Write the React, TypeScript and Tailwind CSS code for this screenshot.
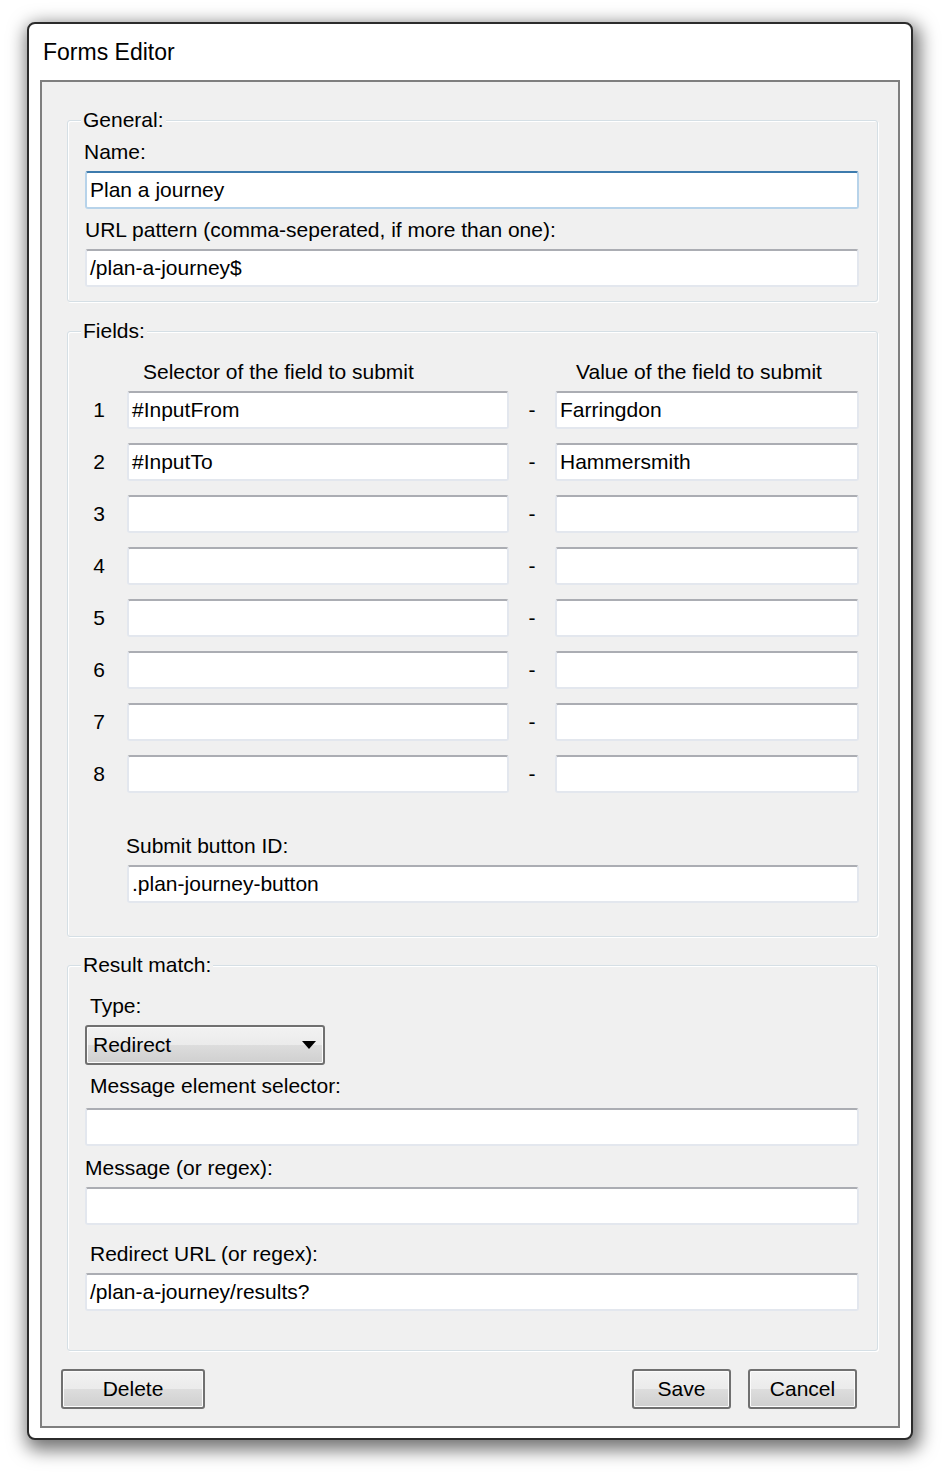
import type { ReactNode } from 'react';

function TextBox({ value = '', focused = false, className = '' }: { value?: string; focused?: boolean; className?: string }) {
  return (
    <div
      className={`h-[38px] bg-white border-2 rounded-[3px] pl-[3px] flex items-center whitespace-nowrap overflow-hidden ${
        focused ? 'border-[#b7d3ea] border-t-[#3d7bad]' : 'border-[#e3e7ee] border-t-[#abadb3]'
      } ${className}`}
    >
      {value}
    </div>
  );
}

function Label({ children, className = '' }: { children: ReactNode; className?: string }) {
  return <div className={`h-[24px] leading-[24px] ${className}`}>{children}</div>;
}

function Group({ title, className = '', children }: { title: string; className?: string; children: ReactNode }) {
  return (
    <div
      className={`relative ml-[25px] mr-[20px] border border-[#d5dfe5] rounded-[3px] shadow-[inset_1px_1px_0_#ffffff,1px_1px_0_#ffffff] ${className}`}
    >
      <span className="absolute left-[13px] -top-[13px] bg-[#f0f0f0] px-[2px] leading-[24px]">{title}</span>
      {children}
    </div>
  );
}

function Button({ children, className = '' }: { children: ReactNode; className?: string }) {
  return (
    <div
      className={`h-[40px] border-2 border-[#707070] rounded-[3px] flex items-center justify-center bg-[linear-gradient(#f2f2f2,#ebebeb_50%,#dddddd_50%,#cfcfcf)] shadow-[inset_0_0_0_1px_#fbfbfb] ${className}`}
    >
      {children}
    </div>
  );
}

const fields = [
  { sel: '#InputFrom', val: 'Farringdon' },
  { sel: '#InputTo', val: 'Hammersmith' },
  { sel: '', val: '' },
  { sel: '', val: '' },
  { sel: '', val: '' },
  { sel: '', val: '' },
  { sel: '', val: '' },
  { sel: '', val: '' },
];

export default function App() {
  return (
    <div className="w-[952px] h-[1474px] bg-white overflow-hidden pt-[22px] pl-[27px] text-black text-[21px] font-['Liberation_Sans',Arial,sans-serif]">
      <div className="w-[886px] h-[1418px] bg-white border-2 border-[#2b2b2b] rounded-[8px] shadow-[3px_6px_18px_4px_rgba(0,0,0,0.55)] flex flex-col">
        {/* title bar */}
        <div className="h-[56px] shrink-0 flex items-center pl-[14px] text-[23px]">Forms Editor</div>

        {/* client area */}
        <div className="mx-[11px] h-[1348px] bg-[#f0f0f0] border-2 border-[#7f7f7f] flex flex-col">
          <Group title="General:" className="mt-[38px] pt-[19px] pb-[14px] pl-[17px] pr-[18px]">
            <Label className="-ml-[1px]">Name:</Label>
            <TextBox value="Plan a journey" focused className="mt-[7px]" />
            <Label className="mt-[9px]">URL pattern (comma-seperated, if more than one):</Label>
            <TextBox value="/plan-a-journey$" className="mt-[7px]" />
          </Group>

          <Group title="Fields:" className="mt-[29px] pt-[28px] pb-[33px] pl-[17px] pr-[18px]">
            <div className="flex h-[24px] leading-[24px]">
              <div className="w-[42px]" />
              <div className="w-[382px] pl-[16px]">Selector of the field to submit</div>
              <div className="w-[46px]" />
              <div className="w-[304px] pl-[21px]">Value of the field to submit</div>
            </div>
            <div className="mt-[7px] flex flex-col gap-[14px]">
              {fields.map((f, i) => (
                <div key={i} className="flex items-center h-[38px]">
                  <div className="w-[28px] text-center">{i + 1}</div>
                  <TextBox value={f.sel} className="ml-[14px] w-[382px]" />
                  <div className="w-[46px] text-center">-</div>
                  <TextBox value={f.val} className="w-[304px]" />
                </div>
              ))}
            </div>
            <Label className="mt-[41px] ml-[41px]">Submit button ID:</Label>
            <TextBox value=".plan-journey-button" className="mt-[7px] ml-[42px]" />
          </Group>

          <Group title="Result match:" className="mt-[28px] pt-[28px] pb-[39px] pl-[17px] pr-[18px]">
            <Label className="ml-[5px]">Type:</Label>
            <div className="mt-[7px] w-[240px] h-[40px] border-2 border-[#707070] rounded-[3px] flex items-center justify-between pl-[6px] pr-[7px] bg-[linear-gradient(#f2f2f2,#ebebeb_50%,#dddddd_50%,#cfcfcf)] shadow-[inset_0_0_0_1px_#fbfbfb]">
              <span>Redirect</span>
              <svg width="14" height="8" viewBox="0 0 14 8">
                <path d="M0 0H14L7 8Z" fill="#000" />
              </svg>
            </div>
            <Label className="mt-[9px] ml-[5px]">Message element selector:</Label>
            <TextBox className="mt-[10px]" />
            <Label className="mt-[10px]">Message (or regex):</Label>
            <TextBox className="mt-[7px]" />
            <Label className="mt-[17px] ml-[5px]">Redirect URL (or regex):</Label>
            <TextBox value="/plan-a-journey/results?" className="mt-[7px]" />
          </Group>

          <div className="mt-[18px] flex items-center pl-[19px] pr-[41px]">
            <Button className="w-[144px]">Delete</Button>
            <div className="flex-1" />
            <Button className="w-[99px]">Save</Button>
            <Button className="w-[109px] ml-[17px]">Cancel</Button>
          </div>
        </div>
      </div>
    </div>
  );
}
